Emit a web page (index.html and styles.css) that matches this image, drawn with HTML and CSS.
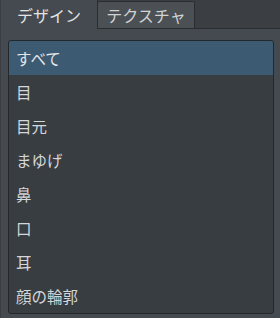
FILE: index.html
```html
<!DOCTYPE html>
<html lang="ja">
  <head>
    <meta charset="UTF-8" />
    <meta name="viewport" content="width=device-width, initial-scale=1" />
    <title>パーツ</title>
    <link rel="stylesheet" href="styles.css">
  </head>
  <body>
    <div class="tabs">
      <div class="tab active">デザイン</div>
      <div class="tab">テクスチャ</div>
      <div class="tab-fill"></div>
    </div>

    <div class="panel">
      <ul class="list">
        <li class="selected">すべて</li>
        <li>目</li>
        <li>目元</li>
        <li>まゆげ</li>
        <li>鼻</li>
        <li>口</li>
        <li>耳</li>
        <li>顔の輪郭</li>
      </ul>
    </div>
  </body>
</html>
```

FILE: styles.css
```css
body {
  margin: 0;
  width: 280px;
  height: 318px;
  overflow: hidden;
  background-color: #3b3f43;
  font-family: "Noto Sans CJK JP", "Noto Sans", sans-serif;
  color: #d4d6d8;
  display: flex;
  flex-direction: column;
}

.tabs {
  display: flex;
  height: 29px;
  flex-shrink: 0;
}

.tab {
  width: 97px;
  box-sizing: border-box;
  font-size: 16px;
  line-height: 26px;
  text-align: center;
  background-color: #4b5055;
  border: 1px solid #2b2e31;
  border-left: none;
  margin-top: 1px;
  border-radius: 2px 2px 0 0;
  color: #d0d2d4;
}

.tab.active {
  width: 98px;
  margin-top: 0;
  background-color: #444a4f;
  border: none;
  border-right: 1px solid #2b2e31;
  border-left: 1px solid #3a3e42;
  line-height: 30px;
  padding-bottom: 2px;
  color: #e2e4e6;
  border-radius: 0;
}

.tab-fill {
  flex: 1;
  border-bottom: 1px solid #2b2e31;
}

.panel {
  flex: 1;
  background-color: #444a4f;
  border-left: 1px solid #3a3e42;
  padding: 11px 6px 0 7px;
}

.list {
  list-style: none;
  margin: 0;
  padding: 0;
  background-color: #383d42;
  border: 1px solid #25282b;
  border-radius: 3px;
  overflow: hidden;
}

.list li {
  height: 34px;
  line-height: 34px;
  padding-left: 7px;
  font-size: 15.5px;
}

.list li.selected {
  background-color: #3c5b73;
  color: #e4e6e8;
}
```
